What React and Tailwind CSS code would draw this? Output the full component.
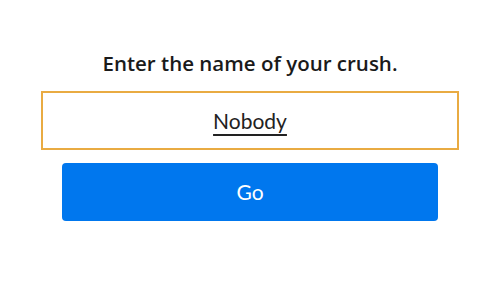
import React from 'react';

const App = () => {
  return (
    <div className="w-[500px] h-[281px] bg-white font-['Lato','Open_Sans',sans-serif]">
      <div className="pt-[50px] px-[41px]">
        <h1 className="text-center text-[20.5px] leading-[26px] font-semibold text-[#1a1a1a] font-['Open_Sans',sans-serif]">
          Enter the name of your crush.
        </h1>
        <div className="mt-[15px] h-[59px] border-2 border-[#e9ab42] flex items-center justify-center">
          <span className="text-[21px] text-[#222] underline underline-offset-[5px] decoration-[1.5px]">Nobody</span>
        </div>
        <button className="mt-[13px] mx-[21px] w-[376px] h-[58px] rounded-[4px] bg-[#0077ee] text-white text-[21px]">
          Go
        </button>
      </div>
    </div>
  );
};

export default App;
